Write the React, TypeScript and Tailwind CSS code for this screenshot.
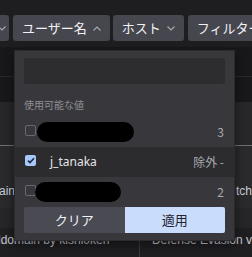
import { useState } from 'react';

const jp = { fontFamily: '"Noto Sans CJK JP", "Noto Sans", sans-serif' };

function Chevron({ up = false }: { up?: boolean }) {
  return (
    <svg width="8" height="5" viewBox="0 0 8 5" className="shrink-0">
      <path
        d={up ? 'M0.5 4.5 L4 1 L7.5 4.5' : 'M0.5 0.5 L4 4 L7.5 0.5'}
        fill="none"
        stroke="#a9a9b0"
        strokeWidth="1.1"
      />
    </svg>
  );
}

function FilterButton({ label, open = false, className = '' }: { label: string; open?: boolean; className?: string }) {
  return (
    <button
      className={`h-[26px] shrink-0 whitespace-nowrap rounded-[3px] bg-[#46464f] px-[9px] flex items-center gap-[6px] text-[13px] text-[#f2f2f4] ${className}`}
      style={jp}
    >
      {label}
      <Chevron up={open} />
    </button>
  );
}

function Checkbox({ checked }: { checked: boolean }) {
  if (checked) {
    return (
      <span className="block w-[11px] h-[11px] rounded-[2px] bg-[#a8c7fa] flex items-center justify-center shrink-0">
        <svg width="8" height="7" viewBox="0 0 8 7">
          <path d="M1 3.6 L3 5.6 L7 1.2" fill="none" stroke="#1d2a3f" strokeWidth="1.6" />
        </svg>
      </span>
    );
  }
  return <span className="block w-[11px] h-[11px] rounded-[2px] border border-[#68686e] shrink-0" />;
}

const values = [
  { id: 'a', blob: 'w-[97px] ml-[1px]', count: '3', checked: false },
  { id: 'b', name: 'j_tanaka', count: '除外 -', checked: true },
  { id: 'c', blob: 'w-[86px] -ml-[1px]', count: '2', checked: false },
];

export default function App() {
  const [query, setQuery] = useState('');

  return (
    <div className="relative w-[252px] h-[257px] overflow-hidden bg-[#1e1e20]" style={{ fontFamily: '"Liberation Sans", sans-serif' }}>
      {/* Filter bar */}
      <div className="h-[47px] pt-[15px] flex gap-[3px] -ml-[21px]">
        <button className="h-[26px] w-[30px] shrink-0 rounded-[3px] bg-[#46464f] flex items-center justify-end pr-[3px]">
          <Chevron />
        </button>
        <FilterButton label="ユーザー名" open className="ml-[1px]" />
        <FilterButton label="ホスト" />
        <FilterButton label="フィルター" className="ml-[1px]" />
      </div>

      {/* Table behind */}
      <div className="flex flex-col">
        <div className="h-[30px] bg-[#18181a] border-b border-[#2a2a2e]" />
        <div className="h-[25px] bg-[#18181a]" />
        <div className="h-[44px] bg-[#27272a] border-b border-[#6e6e74]" />
        <div className="h-[62px] bg-[#2a2a2d] flex items-center justify-between text-[12px] text-[#c9cdd8] pt-[28px]">
          <span className="-ml-[1px]">ain</span>
          <span>tch</span>
        </div>
        <div className="h-[20px] bg-[#262629]" />
        <div className="h-[30px] bg-[#1f1f22] flex text-[12px] text-[#c4c8d4] pt-[3px]">
          <div className="w-[146px] border-r border-[#3a3a3e] -ml-[2px] whitespace-nowrap">ldomain by kishi0ken</div>
          <div className="pl-[12px] whitespace-nowrap">Defense Evasion v</div>
        </div>
      </div>

      {/* Dropdown */}
      <div
        className="absolute left-[14px] top-[50px] w-[221px] bg-[#38383c] border border-[#2b2b2e] shadow-[0_4px_10px_rgba(0,0,0,0.45)] pt-[6px] pb-[7px]"
        style={jp}
      >
        <div className="px-[9px]">
          <input
            value={query}
            onChange={(e) => setQuery(e.target.value)}
            className="w-full h-[26px] rounded-[2px] bg-[#2d2d30] outline-none px-2 text-[12px] text-white"
          />
        </div>
        <div className="px-[9px] mt-[14px] h-[14px] text-[10px] leading-[14px] text-[#8e8e94]">使用可能な値</div>
        <div className="mt-[5px] flex flex-col">
          {values.map((v) => (
            <div
              key={v.id}
              className={`h-[30px] px-[10px] flex items-center ${v.checked ? 'bg-[#2c2c2f]' : ''}`}
            >
              <span className="flex -mt-[3px]">
                <Checkbox checked={v.checked} />
              </span>
              {v.name ? (
                <span className="ml-[14px] text-[12px] text-[#e4e4e8]" style={{ fontFamily: '"Noto Sans", sans-serif' }}>
                  {v.name}
                </span>
              ) : (
                <span className={`h-[20px] rounded-full bg-black ${v.blob}`} />
              )}
              <span className="ml-auto text-[12px] text-[#a9a9ae]">{v.count}</span>
            </div>
          ))}
        </div>
        <div className="px-[9px] flex">
          <button className="flex-1 h-[26px] rounded-l-[2px] bg-[#4a4a53] text-[13px] text-[#f4f4f6]">クリア</button>
          <button className="flex-1 h-[26px] rounded-r-[2px] bg-[#c9dcfb] text-[13px] text-[#1f2430]">適用</button>
        </div>
      </div>
    </div>
  );
}
